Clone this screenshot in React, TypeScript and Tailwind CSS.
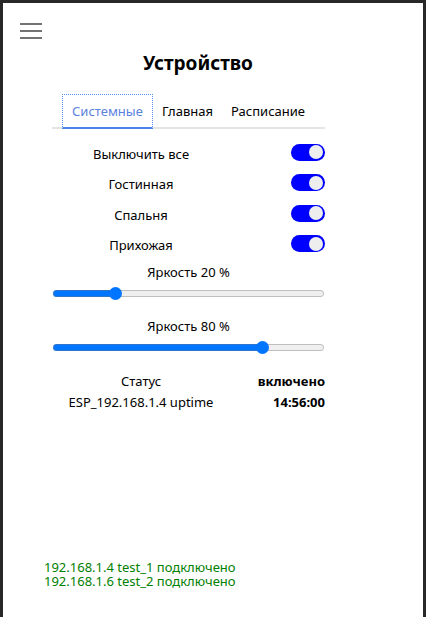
import { useState, type CSSProperties } from "react";

const tabs = ["Системные", "Главная", "Расписание"];
const switches = ["Выключить все", "Гостинная", "Спальня", "Прихожая"];
const statuses = [
  ["Статус", "включено"],
  ["ESP_192.168.1.4 uptime", "14:56:00"],
];
const log = ["192.168.1.4 test_1 подключено", "192.168.1.6 test_2 подключено"];

function Switch({ label }: { label: string }) {
  return (
    <label className="flex items-center">
      <span className="w-[178px] pt-1 text-center">{label}</span>
      <input
        type="checkbox"
        defaultChecked
        className="ml-auto flex h-[17px] w-[34px] appearance-none items-center rounded-full bg-gray-400 px-[2px] before:size-[14px] before:rounded-full before:bg-[#eeeeee] checked:justify-end checked:bg-[#0000ff]"
      />
    </label>
  );
}

function Brightness({ initial }: { initial: number }) {
  const [level, setLevel] = useState(initial);
  const percent = (level / 255) * 100;
  return (
    <label className="block h-[54px] text-center">
      <span className="block leading-5">Яркость {Math.round(percent / 10) * 10} %</span>
      <input
        type="range"
        min={0}
        max={255}
        value={level}
        onChange={(e) => setLevel(Number(e.target.value))}
        style={{ "--fill": `${percent}%` } as CSSProperties}
        className="mx-px mt-[5px] block h-[13px] w-[271px] appearance-none bg-transparent [&::-webkit-slider-runnable-track]:h-[7px] [&::-webkit-slider-runnable-track]:rounded-full [&::-webkit-slider-runnable-track]:bg-[linear-gradient(to_right,#0075ff_var(--fill),transparent_var(--fill)),linear-gradient(#efefef,#efefef)] [&::-webkit-slider-runnable-track]:shadow-[inset_0_0_0_1px_#77777766] [&::-webkit-slider-thumb]:-mt-[3px] [&::-webkit-slider-thumb]:size-[13px] [&::-webkit-slider-thumb]:appearance-none [&::-webkit-slider-thumb]:rounded-full [&::-webkit-slider-thumb]:bg-[#0075ff]"
      />
    </label>
  );
}

export default function App() {
  const [active, setActive] = useState(0);
  return (
    <div className="min-h-screen border-x-[3px] border-t-[3px] border-[#282828] bg-white font-['Noto_Sans','Open_Sans',sans-serif] text-[13px] text-black">
      <header className="px-[17px] pt-5">
        <button type="button" aria-label="Меню" className="flex h-4 w-[22px] flex-col justify-between">
          <span className="h-[2px] w-full bg-[#737373]" />
          <span className="h-[2px] w-full bg-[#737373]" />
          <span className="h-[2px] w-full bg-[#737373]" />
        </button>
      </header>
      <main className="mx-[49px] max-w-[273px]">
        <h1 className="mt-[10px] ml-[19px] text-center text-[19px] leading-7 font-bold">Устройство</h1>
        <nav className="mt-[17px] flex h-[35px] border-b-2 border-[#e4e4e4] pl-[10px]">
          {tabs.map((tab, i) => (
            <button
              key={tab}
              type="button"
              onClick={() => setActive(i)}
              className={
                i === active
                  ? "-mb-[2px] h-[35px] border border-b-2 border-dotted border-[#5b8def] [border-bottom-style:solid] border-b-[#4f81e8] px-[9px] pt-px text-[#5b83e0]"
                  : "px-[9px] pt-[2px]"
              }
            >
              {tab}
            </button>
          ))}
        </nav>
        <section className="mt-[8px] grid h-[122px] grid-rows-4">
          {switches.map((label) => (
            <Switch key={label} label={label} />
          ))}
        </section>
        <section className="mt-[3px]">
          <Brightness initial={55} />
          <Brightness initial={201} />
        </section>
        <dl className="mt-px">
          {statuses.map(([name, value]) => (
            <div key={name} className="flex justify-between leading-[21px]">
              <dt className="w-[178px] text-center">{name}</dt>
              <dd className="font-bold">{value}</dd>
            </div>
          ))}
        </dl>
      </main>
      <footer className="mt-[147px] px-[41px] leading-[14px] text-[#008000]">
        {log.map((line) => (
          <p key={line}>{line}</p>
        ))}
      </footer>
    </div>
  );
}
